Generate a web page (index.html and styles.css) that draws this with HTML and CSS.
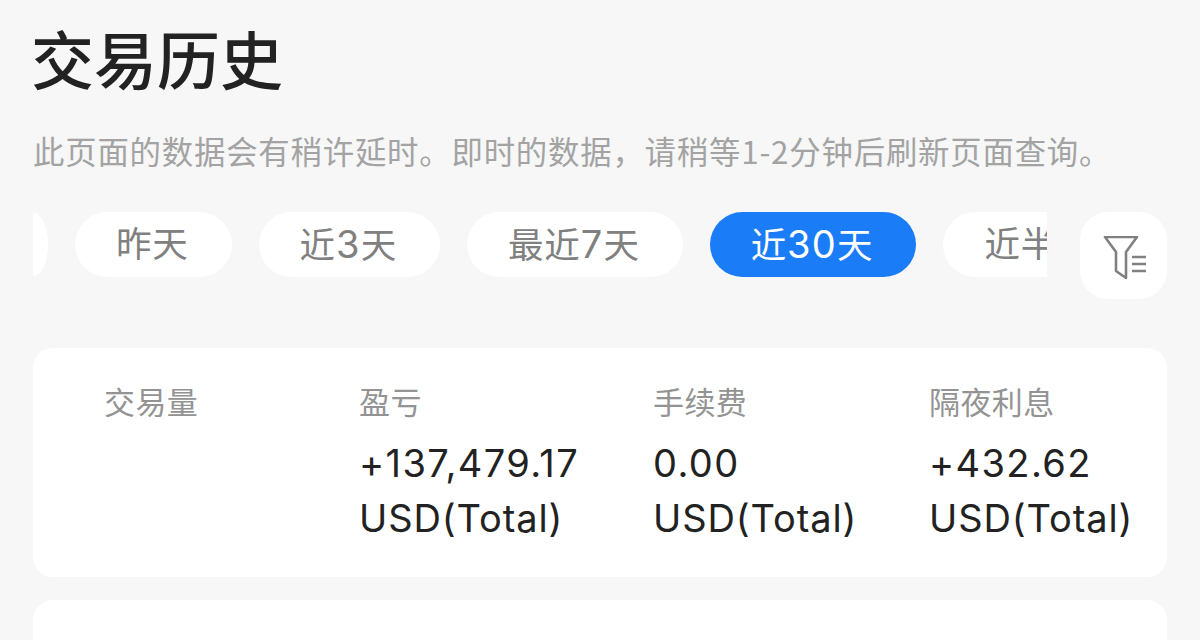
FILE: index.html
```html
<!DOCTYPE html>
<html lang="zh-CN">
<head>
    <meta charset="UTF-8">
    <meta name="viewport" content="width=device-width, initial-scale=1.0">
    <title>交易历史</title>
    <link rel="stylesheet" href="styles.css">
</head>
<body>
    <div class="page">
        <h1 class="title">交易历史</h1>
        <p class="note">此页面的数据会有稍许延时。即时的数据，请稍等1-2分钟后刷新页面查询。</p>

        <div class="filter-row">
            <div class="chips">
                <span class="chip-edge"></span>
                <span class="chip">昨天</span>
                <span class="chip">近<span class="num">3</span>天</span>
                <span class="chip">最近<span class="num">7</span>天</span>
                <span class="chip active">近<span class="num">30</span>天</span>
                <span class="chip">近半年</span>
            </div>
            <button class="filter-btn" type="button" aria-label="筛选">
                <svg width="44" height="44" viewBox="0 0 44 44" fill="none" stroke="#808080" stroke-width="2.6" stroke-linejoin="round">
                    <path d="M2 1H34L23 16V42L13 35V16Z"/>
                    <path d="M29 21H43M29 28H43M29 35H43"/>
                </svg>
            </button>
        </div>

        <div class="card stats">
            <div class="stat">
                <div class="stat-label">交易量</div>
            </div>
            <div class="stat">
                <div class="stat-label">盈亏</div>
                <div class="stat-amount">+137,479.17</div>
                <div class="stat-unit">USD(Total)</div>
            </div>
            <div class="stat">
                <div class="stat-label">手续费</div>
                <div class="stat-amount">0.00</div>
                <div class="stat-unit">USD(Total)</div>
            </div>
            <div class="stat">
                <div class="stat-label">隔夜利息</div>
                <div class="stat-amount">+432.62</div>
                <div class="stat-unit">USD(Total)</div>
            </div>
        </div>

        <div class="card next-card"></div>
    </div>
</body>
</html>
```

FILE: styles.css
```css
html, body {
    height: 100%;
}

body {
    margin: 0;
    background: #f7f7f7;
    font-family: "Noto Sans CJK SC", "Noto Sans", sans-serif;
    overflow: hidden;
}

.page {
    height: 640px;
    padding: 0 33px;
    box-sizing: border-box;
    overflow: hidden;
}

.title {
    margin: 0 0 0 -2px;
    padding-top: 12px;
    font-size: 63px;
    line-height: 90px;
    font-weight: 500;
    color: #222;
}

.note {
    margin: 26px 0 0;
    font-size: 31.4px;
    letter-spacing: 0.8px;
    line-height: 46px;
    color: #a3a3a3;
    white-space: nowrap;
}

.filter-row {
    display: flex;
    align-items: flex-start;
    margin-top: 38px;
}

.chips {
    display: flex;
    gap: 27px;
    width: 1014px;
    overflow: hidden;
    flex-shrink: 0;
}

.chip-edge {
    flex: 0 0 15px;
    height: 65px;
    background: #fff;
    clip-path: ellipse(15px 32px at 0 50%);
}

.chip {
    flex-shrink: 0;
    height: 65px;
    line-height: 65px;
    padding: 0 43px 0 41px;
    background: #fff;
    border-radius: 33px;
    font-family: "Inter", "Noto Sans CJK SC", sans-serif;
    font-size: 35.5px;
    letter-spacing: 0.8px;
    color: #808080;
    white-space: nowrap;
}

.chip .num {
    font-size: 38px;
    letter-spacing: 1.3px;
}

.chip.active {
    background: #1a7cf7;
    color: #fff;
}

.filter-btn {
    display: flex;
    align-items: center;
    justify-content: center;
    width: 87px;
    height: 87px;
    margin-left: 33px;
    padding: 5px 0 0 3px;
    border: none;
    border-radius: 28px;
    background: #fff;
}

.card {
    background: #fff;
    border-radius: 20px;
}

.stats {
    display: grid;
    grid-template-columns: 255px 294px 276px 1fr;
    height: 229px;
    margin-top: 49px;
    padding: 30px 0 0 71px;
    box-sizing: border-box;
}

.stat-label {
    font-size: 31px;
    letter-spacing: 0.4px;
    line-height: 46px;
    color: #939393;
    margin-bottom: 12px;
}

.stat-amount,
.stat-unit {
    font-family: "Inter", "Noto Sans", sans-serif;
    font-size: 38px;
    line-height: 55px;
    color: #222;
    white-space: nowrap;
}

.stat-amount {
    letter-spacing: 1.4px;
}

.stat-unit {
    letter-spacing: 0.9px;
}

.next-card {
    height: 80px;
    margin-top: 23px;
}
```
